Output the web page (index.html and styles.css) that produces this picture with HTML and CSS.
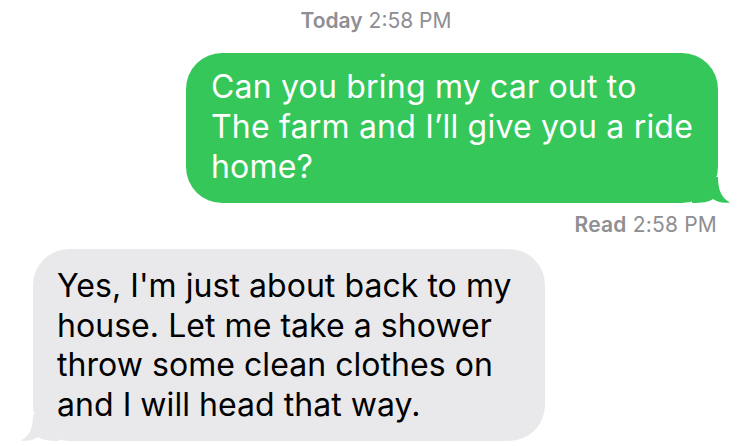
FILE: index.html
```html
<!DOCTYPE html>
<html>
<head>
<meta charset="utf-8">
<link rel="stylesheet" href="styles.css">
</head>
<body>
<div class="thread">
  <div class="stamp"><span class="stamp-day">Today</span> 2:58 PM</div>
  <div class="row row-sent">
    <div class="bubble sent">Can you bring my car out to<br>The farm and I’ll give you a ride<br>home?<svg class="tail tail-sent" width="40" height="26" viewBox="0 0 40 26"><path d="M0,0 H26 C26,12 29,21 38,25.5 C31,26.5 25,25 21,22 C17,25 10,26 0,26 Z"/></svg></div>
  </div>
  <div class="receipt"><span class="receipt-label">Read</span> 2:58 PM</div>
  <div class="row row-recv">
    <div class="bubble recv">Yes, I'm just about back to my<br>house. Let me take a shower<br>throw some clean clothes on<br>and I will head that way.<svg class="tail tail-recv" width="40" height="26" viewBox="0 0 40 26"><path d="M0,0 H26 C26,12 29,21 38,25.5 C31,26.5 25,25 21,22 C17,25 10,26 0,26 Z"/></svg></div>
  </div>
</div>
</body>
</html>
```
FILE: styles.css
```css
html, body {
  margin: 0;
  padding: 0;
  background: #ffffff;
}
body {
  width: 750px;
  height: 446px;
  overflow: hidden;
  font-family: Inter, "Liberation Sans", sans-serif;
}
.thread {
  display: flex;
  flex-direction: column;
  padding-top: 9px;
}
.stamp {
  text-align: center;
  font-size: 21px;
  line-height: 24px;
  color: #8e8e93;
  padding-left: 2px;
}
.stamp-day {
  font-weight: 600;
}
.row {
  display: flex;
}
.row-sent {
  justify-content: flex-end;
  padding-right: 32px;
  margin-top: 20px;
}
.row-recv {
  justify-content: flex-start;
  padding-left: 33px;
  margin-top: 12px;
}
.bubble {
  position: relative;
  font-size: 32px;
  line-height: 40px;
  letter-spacing: 0.2px;
  border-radius: 36px;
}
.sent {
  background: #35c759;
  color: #ffffff;
  padding: 14px 25px 16px 25px;
}
.recv {
  background: #e9e9eb;
  color: #000000;
  padding: 17px 33px 17px 24px;
  line-height: 39.5px;
  letter-spacing: 0.05px;
}
.tail {
  position: absolute;
  bottom: 0;
  display: block;
}
.tail-sent {
  right: -14px;
  fill: #35c759;
}
.tail-recv {
  left: -14px;
  fill: #e9e9eb;
  transform: scaleX(-1);
}
.receipt {
  text-align: right;
  padding-right: 33px;
  margin-top: 10px;
  font-size: 21px;
  line-height: 24px;
  color: #8e8e93;
  letter-spacing: 0.2px;
}
.receipt-label {
  font-weight: 600;
}
```
